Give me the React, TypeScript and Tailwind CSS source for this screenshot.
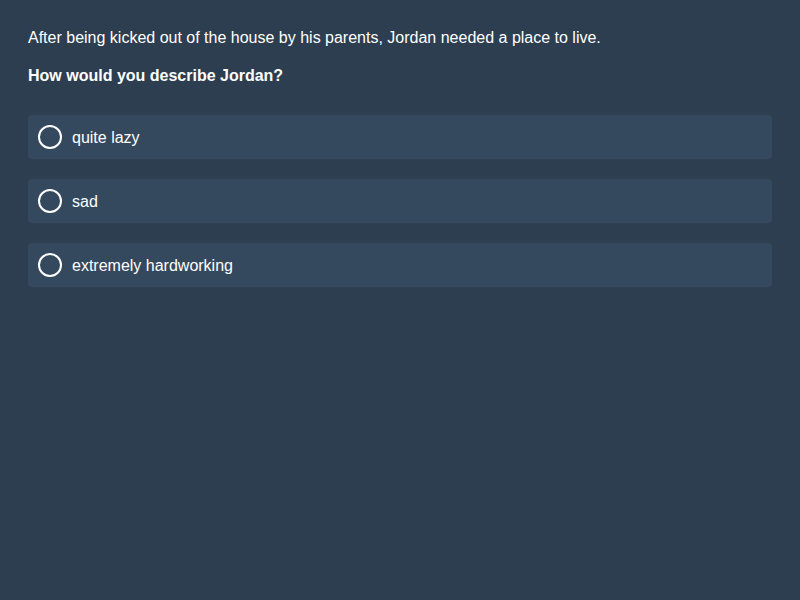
const options = ["quite lazy", "sad", "extremely hardworking"];

export default function App() {
  return (
    <div className="min-h-screen w-full bg-[#2c3e50] p-7 text-white font-['Liberation_Sans',Arial,sans-serif] text-base">
      <p className="leading-5">After being kicked out of the house by his parents, Jordan needed a place to live.</p>
      <p className="mt-[18px] leading-5 font-bold">How would you describe Jordan?</p>

      <div className="mt-[29px] flex flex-col gap-5">
        {options.map((opt) => (
          <label
            key={opt}
            className="flex items-center gap-[10px] rounded bg-[#34495e] px-[10px] py-[10px] cursor-pointer"
          >
            <span className="block h-6 w-6 shrink-0 rounded-full border-2 border-white" />
            <span className="leading-5 pt-0.5">{opt}</span>
          </label>
        ))}
      </div>
    </div>
  );
}
